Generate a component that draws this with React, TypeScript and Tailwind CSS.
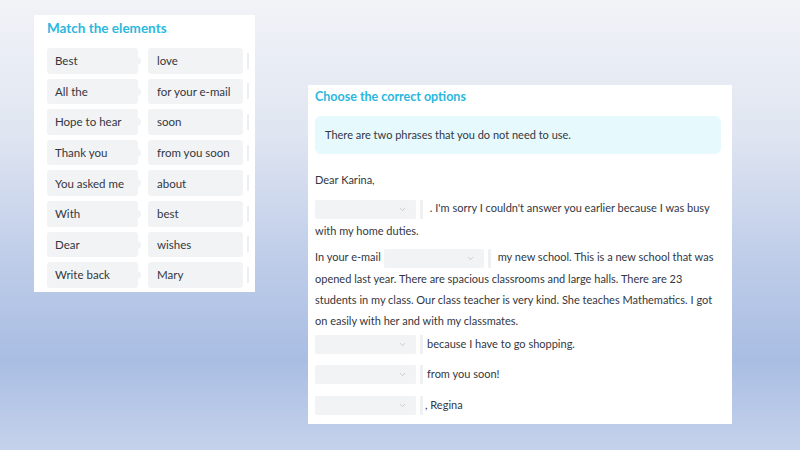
import { ChevronDown } from 'lucide-react';

const pairs = [
  ['Best', 'love'],
  ['All the', 'for your e-mail'],
  ['Hope to hear', 'soon'],
  ['Thank you', 'from you soon'],
  ['You asked me', 'about'],
  ['With', 'best'],
  ['Dear', 'wishes'],
  ['Write back', 'Mary'],
];

function Select({ width = 'w-[101px]' }: { width?: string }) {
  return (
    <span className="inline-flex items-center align-middle gap-[4px]">
      <span className={`${width} h-[19px] bg-[#f2f3f5] rounded-[2px] inline-flex items-center justify-end pr-[9px]`}>
        <ChevronDown className="w-[9px] h-[9px] text-[#b9bdc4]" strokeWidth={2} />
      </span>
      <span className="w-[3px] h-[19px] bg-[#eef0f2]" />
    </span>
  );
}

export default function App() {
  return (
    <div
      className="w-[800px] h-[450px] relative overflow-hidden bg-[linear-gradient(to_bottom,#f1f3f7_0%,#dfe5f1_30%,#bccbe8_60%,#a9bde3_80%,#c5d2eb_100%)] text-[#33373f]"
      style={{ fontFamily: 'Lato, "Noto Sans", sans-serif' }}
    >
      {/* match the elements */}
      <div className="absolute left-[34px] top-[15px] w-[221px] h-[277px] bg-white pl-[13px] pt-[5px]">
        <h2 className="text-[13.5px] font-bold text-[#2bb7de] leading-[16px]">Match the elements</h2>
        <div className="mt-[12px] flex flex-col gap-[5px]">
          {pairs.map(([a, b]) => (
            <div key={a} className="flex items-center h-[25.6px]">
              <div className="relative w-[91px] h-full bg-[#f2f3f5] rounded-[3px] flex items-center pl-[8px] text-[11.5px]">
                {a}
                <span className="absolute right-[-3px] top-[9px] w-[4px] h-[8px] rounded-r-full bg-[#f2f3f5]" />
              </div>
              <div className="ml-[10px] w-[95px] h-full bg-[#f2f3f5] rounded-[3px] flex items-center pl-[9px] text-[11.5px]">
                {b}
              </div>
              <div className="ml-[4px] w-[2px] h-[16px] bg-[#eceef1]" />
            </div>
          ))}
        </div>
      </div>

      {/* choose the correct options */}
      <div className="absolute left-[308px] top-[85px] w-[424px] h-[339px] bg-white px-[7px] pt-[4px] text-[11px]">
        <h2 className="text-[12.5px] font-bold text-[#2bb7de] leading-[16px]">Choose the correct options</h2>
        <div className="mt-[11px] w-[406px] h-[38px] bg-[#e6f9fd] rounded-[6px] flex items-center pl-[10px]">
          There are two phrases that you do not need to use.
        </div>
        <p className="mt-[19px] leading-[14px]">Dear Karina,</p>
        <div className="mt-[9px] leading-[23px]">
          <Select /> <span className="ml-[4px]">. I'm sorry I couldn't answer you earlier because I was busy</span>
          <br />
          with my home duties.
        </div>
        <div className="mt-[4px] leading-[21px]">
          In your e-mail <Select width="w-[100px]" />
          <span className="ml-[7px]">my new school. This is a new school that was</span> opened last year. There are
          spacious classrooms and large halls. There are 23 students in my class. Our class teacher is very kind. She
          teaches Mathematics. I got on easily with her and with my classmates.
        </div>
        <div className="mt-[4px] flex flex-col gap-[11.5px]">
          <div className="flex items-center gap-[4px]">
            <Select /> <span>because I have to go shopping.</span>
          </div>
          <div className="flex items-center gap-[4px]">
            <Select /> <span>from you soon!</span>
          </div>
          <div className="flex items-center gap-[2px]">
            <Select /> <span>, Regina</span>
          </div>
        </div>
      </div>
    </div>
  );
}
